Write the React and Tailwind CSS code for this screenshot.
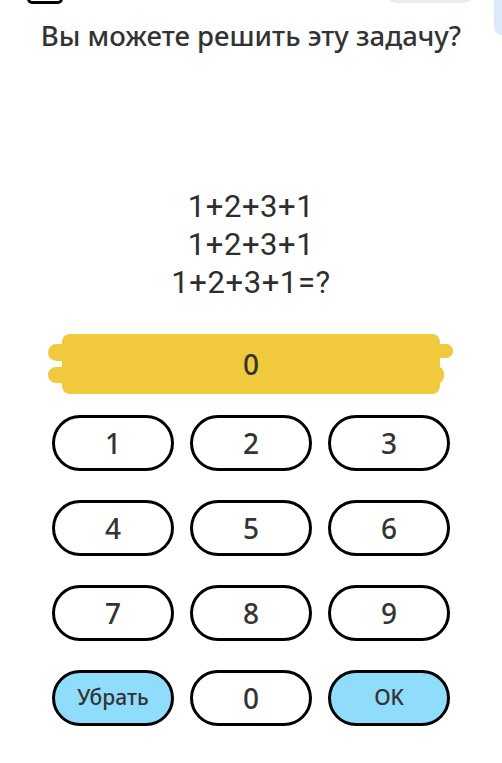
import React from 'react';

const keys = ['1', '2', '3', '4', '5', '6', '7', '8', '9'];

const Key = ({ label, blue, small }) => (
  <button
    className={`h-[56px] rounded-full border-[3.5px] border-black flex items-center justify-center font-medium text-[#333] ${blue ? 'bg-[#8fdcfb]' : 'bg-white'} ${small ? 'text-[21px]' : 'text-[28px]'}`}
  >
    {label}
  </button>
);

const App = () => {
  return (
    <div className="relative w-[502px] h-[763px] bg-white overflow-hidden" style={{ fontFamily: '"Noto Sans", sans-serif' }}>
      {/* clipped bits of the top bar */}
      <div className="absolute left-[27px] top-[-20px] w-[36px] h-[24px] border-[3px] border-black rounded-[5px]"></div>
      <div className="absolute left-[385px] top-[-20px] w-[90px] h-[23px] bg-[#ececec] rounded-full"></div>
      <div className="absolute left-[494px] top-[-10px] w-[20px] h-[45px] bg-[#dbe9fb] rounded-[8px]"></div>

      <h1 className="pt-[21px] text-center text-[27.5px] leading-[30px] font-medium text-[#333]">Вы можете решить эту задачу?</h1>

      <div className="mt-[137px] flex flex-col items-center text-[31px] leading-[38px] text-[#2e2e2e] tracking-[0.6px]" style={{ fontFamily: 'Roboto, "Liberation Sans", sans-serif' }}>
        <div>1+2+3+1</div>
        <div>1+2+3+1</div>
        <div>1+2+3+1=?</div>
      </div>

      <div className="relative mx-auto mt-[32px] w-[378px] h-[60px] bg-[#f1c93d] rounded-[8px] flex items-center justify-center">
        <div className="absolute left-[-14px] top-[10px] w-[26px] h-[17px] bg-[#f1c93d] rounded-full"></div>
        <div className="absolute left-[-14px] top-[33px] w-[26px] h-[16px] bg-[#f1c93d] rounded-full"></div>
        <div className="absolute right-[-13px] top-[10px] w-[26px] h-[14px] bg-[#f1c93d] rounded-full"></div>
        <div className="absolute right-[-4px] top-[32px] w-[16px] h-[18px] bg-[#f1c93d] rounded-full"></div>
        <span className="relative text-[28px] font-medium text-[#333]">0</span>
      </div>

      <div className="mx-auto mt-[21px] w-[398px] grid grid-cols-3 gap-x-4 gap-y-[29px]">
        {keys.map(k => <Key key={k} label={k} />)}
        <Key label="Убрать" blue small />
        <Key label="0" />
        <Key label="OK" blue small />
      </div>
    </div>
  );
};

export default App;
